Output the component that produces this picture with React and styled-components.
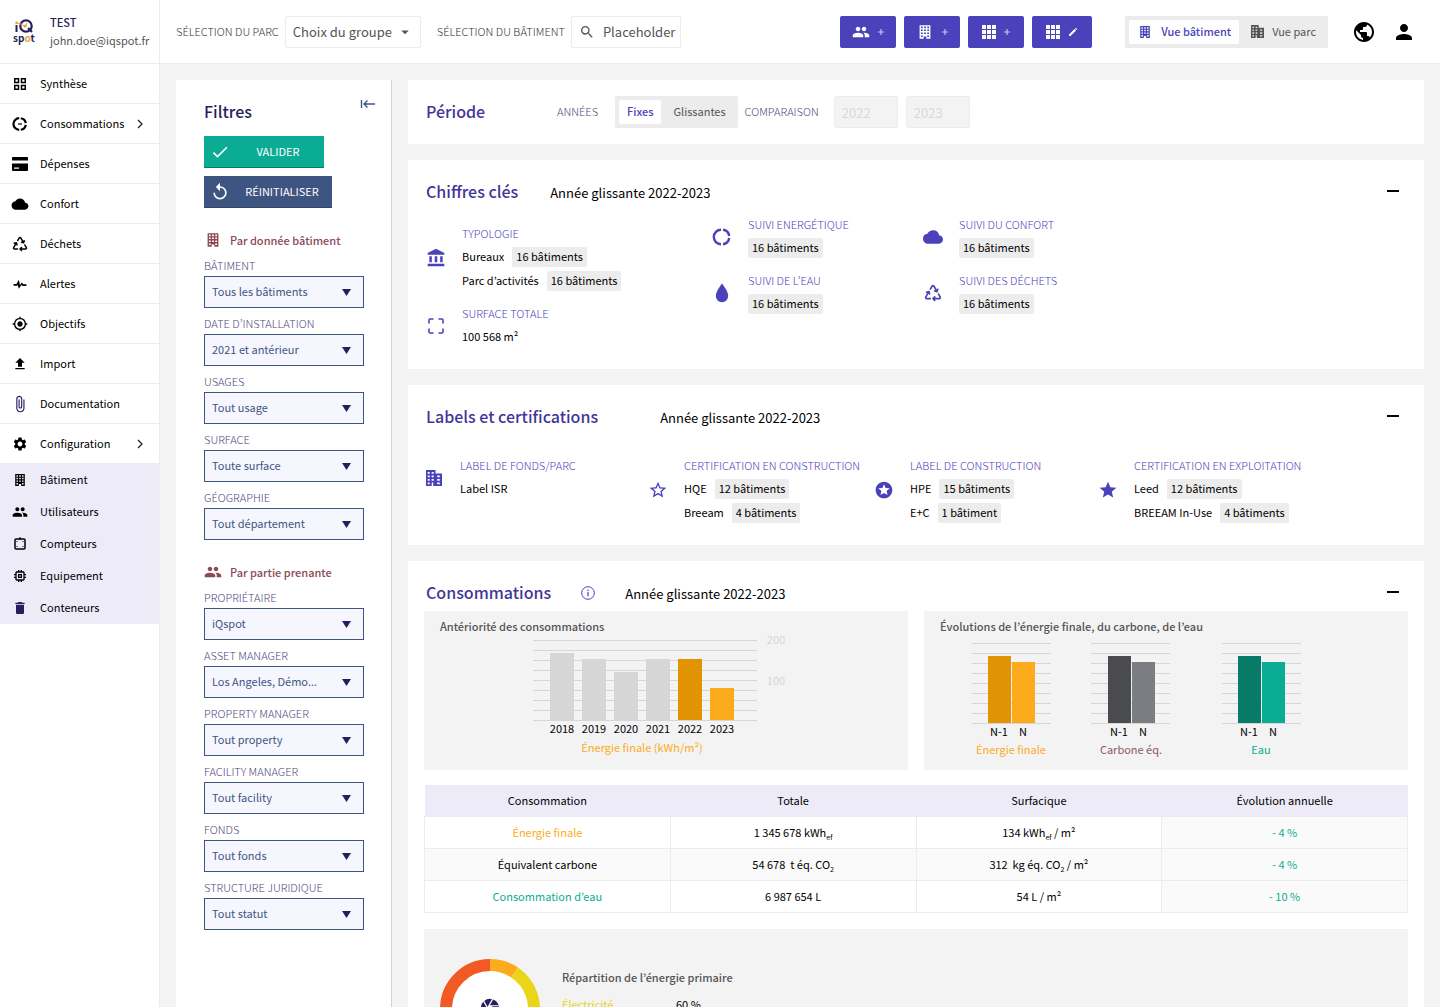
import React, { useState } from 'react';
import styled, { createGlobalStyle, css } from 'styled-components';
import {
  MdAccountBalance,
  MdArrowDropDown,
  MdAttachFile,
  MdCamera,
  MdCheck,
  MdCloud,
  MdDelete,
  MdFileUpload,
  MdGroup,
  MdMemory,
  MdMyLocation,
  MdPerson,
  MdPublic,
  MdReplay,
  MdSearch,
  MdSettings,
  MdStar,
  MdStarBorder,
  MdStars,
} from 'react-icons/md';
import { IoMdCloud } from 'react-icons/io';
import { PiRecycle, PiRecycleBold } from 'react-icons/pi';

const GlobalStyle = createGlobalStyle`
  *, *::before, *::after {
    box-sizing: border-box;
  }

  body {
    margin: 0;
    color: #000;
    background-color: #f3f3f3;
    font-family: 'Noto Sans CJK KR', 'Noto Sans', sans-serif;
    font-size: 11px;
    line-height: 20px;
  }

  h1, h2, h3, p, ul, figure {
    margin: 0;
    padding: 0;
  }

  button, input, select {
    font: inherit;
    color: inherit;
  }

  svg {
    display: block;
    flex-shrink: 0;
  }
`;

// the font sits low in its line box
const raisedText = css`
  padding-bottom: 2px;
  line-height: 18px;
`;

/* icons */

const BuildingIcon = ({ size = 20 }) => (
  <svg width={size} height={size} viewBox="0 0 20 20" fill="currentColor">
    <path
      fillRule="evenodd"
      d="M4 2.500h12v15h-4.500v-2.500h-3v2.500H4zM5.500 4v1.800h2v-1.800zM9 4v1.800h2v-1.800zM12.500 4v1.800h2v-1.800zM5.500 7.200v1.800h2v-1.800zM9 7.200v1.800h2v-1.800zM12.500 7.200v1.800h2v-1.800zM5.500 10.500v1.800h2v-1.800zM9 10.500v1.800h2v-1.800zM12.500 10.500v1.800h2v-1.800zM5.500 13.800v1.800h2v-1.800zM12.500 13.800v1.800h2v-1.800z"
    />
  </svg>
);

const BuildingsIcon = ({ size = 16 }) => (
  <svg width={size} height={size} viewBox="0 0 16 16" fill="currentColor">
    <path
      fillRule="evenodd"
      d="M0 0h9.500v3.500H16V16H0zM1.700 2v1.700h2V2zM5.700 2v1.700h2V2zM1.700 5.500v1.700h2V5.500zM5.700 5.500v1.700h2V5.500zM1.700 9v1.700h2V9zM5.700 9v1.700h2V9zM1.700 12.500v1.700h2V12.500zM5.700 12.500V16h1.500v-3.500zM11.200 5.500v1.700h2.600V5.500zM11.200 9v1.700h2.600V9zM11.200 12.500v1.700h2.600v-1.700z"
    />
  </svg>
);

const SquaresIcon = () => (
  <svg
    width="12"
    height="12"
    viewBox="0 0 12 12"
    fill="none"
    stroke="currentColor"
    strokeWidth="1.500"
  >
    <path d="M.75.75h3.750v3.750H.75zM7.500.75h3.750v3.750H7.500zM.75 7.500h3.750v3.750H.75zM7.500 7.500h3.750v3.750H7.500z" />
  </svg>
);

const RingIcon = ({ size = 20, withBar }) => (
  <svg
    width={size}
    height={size}
    viewBox="0 0 20 20"
    fill="none"
    stroke="currentColor"
    strokeWidth={withBar ? 2.8 : 2.4}
  >
    <path d="M9 2.800A7.200 7.200 0 0 0 9 17.200M11 2.800A7.200 7.200 0 0 1 17.200 9M17.200 11A7.200 7.200 0 0 1 11 17.200" />
    {withBar && <path d="M7.500 10h5" strokeWidth="1.500" />}
  </svg>
);

const CardIcon = () => (
  <svg width="20" height="20" viewBox="0 0 20 20" fill="currentColor">
    <path d="M3 3h14a1 1 0 0 1 1 1v2.500H2V4a1 1 0 0 1 1-1z" />
    <path
      fillRule="evenodd"
      d="M2 9.500h16V16a1 1 0 0 1-1 1H3a1 1 0 0 1-1-1zM4 13.500v1.200h5v-1.200z"
    />
  </svg>
);

const PulseIcon = () => (
  <svg width="14" height="14" viewBox="0 0 24 24" fill="currentColor">
    <path d="M1 12h5L10 4.500 12 13.500l3-4 3 2.800H23v3h-6.500l-1.800-1.700-5 6.600L8.200 13 7.500 15H1z" />
  </svg>
);

const DropIcon = () => (
  <svg width="20" height="20" viewBox="0 0 20 20" fill="currentColor">
    <path d="M10 .5C10 .5 3.800 8 3.800 13a6.200 6.200 0 0 0 12.400 0C16.200 8 10 .5 10 .5z" />
  </svg>
);

const MeterIcon = () => (
  <svg width="20" height="20" viewBox="0 0 20 20" fill="currentColor">
    <rect
      x="5"
      y="5"
      width="10"
      height="10"
      rx="1"
      fill="none"
      stroke="currentColor"
      strokeWidth="1.500"
    />
    <path d="M9 3.500h2v2H9zM6.500 7h1v1h-1zM12.500 7h1v1h-1zM6.500 12h1v1h-1zM12.500 12h1v1h-1z" />
  </svg>
);

const FrameIcon = () => (
  <svg
    width="20"
    height="20"
    viewBox="0 0 20 20"
    fill="none"
    stroke="currentColor"
    strokeWidth="1.600"
  >
    <path d="M3 7.500V4a1 1 0 0 1 1-1h3.500M12.500 3H16a1 1 0 0 1 1 1v3.500M17 12.500V16a1 1 0 0 1-1 1h-3.500M7.500 17H4a1 1 0 0 1-1-1v-3.500" />
  </svg>
);

const GridIcon = () => (
  <svg width="14" height="14" viewBox="0 0 14 14" fill="currentColor">
    <path d="M0 0h4v4H0zM5 0h4v4H5zM10 0h4v4h-4zM0 5h4v4H0zM5 5h4v4H5zM10 5h4v4h-4zM0 10h4v4H0zM5 10h4v4H5zM10 10h4v4h-4z" />
  </svg>
);

const PlusIcon = () => (
  <svg width="6" height="6" viewBox="0 0 6 6" stroke="#c6c2ec">
    <path d="M3 0v6M0 3h6" strokeWidth="1.200" />
  </svg>
);

const PencilIcon = () => (
  <svg width="10" height="10" viewBox="0 0 10 10" fill="#fff">
    <path d="M1 9V7.500L6.500 2 8 3.500 2.500 9zM7 1.500l.8-.8 1.500 1.500-.8.800z" />
  </svg>
);

const ChevronIcon = () => (
  <svg
    width="8"
    height="10"
    viewBox="0 0 8 10"
    fill="none"
    stroke="#222"
    strokeWidth="1.300"
  >
    <path d="M2 1l4 4-4 4" />
  </svg>
);

const CollapseIcon = () => (
  <svg
    width="16"
    height="10"
    viewBox="0 0 16 10"
    fill="none"
    stroke="currentColor"
    strokeWidth="1.400"
  >
    <path d="M1.500 1v8M15 5H4M7.500 1.500L4 5l3.500 3.500" />
  </svg>
);

const InfoIcon = () => (
  <svg
    width="14"
    height="14"
    viewBox="0 0 14 14"
    fill="none"
    stroke="#4b42bb"
  >
    <circle cx="7" cy="7" r="6.300" />
    <path d="M7 6v4.300M7 3.600v1.300" strokeWidth="1.200" />
  </svg>
);

const Logo = () => (
  <svg width="24" height="28" viewBox="0 0 24 28">
    <circle cx="14" cy="8" r="5.700" fill="none" stroke="#261f5e" strokeWidth="2.200" />
    <path d="M16 10l4 4" stroke="#261f5e" strokeWidth="2.200" />
    <path d="M4.500 7v7" stroke="#261f5e" strokeWidth="2" />
    <path d="M4 5l5 1 5 3 .5-4" fill="none" stroke="#eaa43c" strokeWidth="1" />
    <circle cx="4.500" cy="4.800" r="1.300" fill="#eaa43c" />
    <circle cx="13" cy="8" r="1.500" fill="#eaa43c" />
    <text x="1" y="24" fontSize="10" fontWeight="700" fill="#261f5e">
      sp
      <tspan fill="#eaa43c">o</tspan>t
    </text>
  </svg>
);

/* layout */

const StyledShell = styled.div`
  display: flex;
  height: 100vh;
`;

const StyledSidebar = styled.aside`
  flex: 0 0 160px;
  background-color: #fff;
  border-right: 1px solid #ececec;
`;

const StyledUser = styled.div`
  display: flex;
  align-items: center;
  gap: 14px;
  height: 64px;
  padding-left: 12px;
  border-bottom: 1px solid #ececec;
  color: #555;
`;

const StyledUserName = styled.p`
  font-weight: 500;
  line-height: 16px;
  color: #261f5e;
`;

const StyledMenu = styled.ul`
  list-style: none;
  background-color: ${({ $nested }) => ($nested ? '#edebf8' : '#fff')};
`;

const StyledMenuLink = styled.a`
  display: flex;
  align-items: center;
  gap: 10px;
  height: ${({ $nested }) => ($nested ? 32 : 40)}px;
  padding: 0 15px 0 10px;
  border-bottom: ${({ $nested }) => ($nested ? 0 : 1)}px solid #ececec;
  color: #000;
  text-decoration: none;
`;

const StyledMenuIcon = styled.span`
  display: grid;
  place-items: center;
  width: 20px;
  color: ${({ $navy }) => ($navy ? '#261f5e' : '#000')};
`;

const StyledMenuText = styled.span`
  ${raisedText};
  flex: 1;
`;

const StyledPage = styled.div`
  display: flex;
  flex-direction: column;
  flex: 1;
  min-width: 0;
`;

const StyledTopbar = styled.header`
  display: flex;
  align-items: center;
  flex: 0 0 64px;
  padding: 0 24px 0 16px;
  background-color: #fff;
  border-bottom: 1px solid #ececec;
`;

const StyledTopLabel = styled.label`
  ${raisedText};
  margin-right: 6px;
  font-weight: 300;
  color: #333;
`;

const StyledBody = styled.div`
  display: flex;
  flex: 1;
  gap: 16px;
  min-height: 0;
  padding: 16px 16px 0;
  overflow: auto;
  scrollbar-width: none;
`;

const StyledContent = styled.main`
  display: flex;
  flex-direction: column;
  flex: 1;
  gap: 16px;
  min-width: 0;
`;

/* controls */

const StyledSelectBox = styled.div`
  display: grid;
  align-items: center;

  > * {
    grid-area: 1 / 1;
  }

  svg {
    justify-self: end;
    pointer-events: none;
  }
`;

const StyledGroupSelectBox = styled(StyledSelectBox)`
  width: 136px;
  margin-right: 16px;
  color: #555;

  svg {
    margin-right: 7px;
  }
`;

const StyledGroupSelect = styled.select`
  width: 100%;
  height: 32px;
  padding: 0 24px 0 7px;
  appearance: none;
  background-color: #fff;
  border: 1px solid #ececec;
  border-radius: 2px;
  font-size: 13px;
`;

const StyledSearch = styled.div`
  display: flex;
  align-items: center;
  gap: 8px;
  width: 110px;
  height: 32px;
  padding: 0 2px 0 7px;
  border: 1px solid #ececec;
  border-radius: 2px;
  color: #555;
`;

const StyledSearchInput = styled.input`
  width: 100%;
  min-width: 0;
  padding: 0;
  border: 0;
  outline: none;
  background: transparent;
  font-size: 13px;

  &::placeholder {
    color: #555;
  }
`;

const StyledActions = styled.div`
  display: flex;
  gap: 8px;
  margin-left: auto;
`;

const StyledAction = styled.button`
  display: flex;
  align-items: center;
  justify-content: center;
  gap: 8px;
  width: ${({ $wide }) => ($wide ? 60 : 56)}px;
  height: 32px;
  padding: 0;
  border: 0;
  border-radius: 2px;
  color: #fff;
  background-color: #4b42bb;
  cursor: pointer;
`;

const StyledToggle = styled.div`
  display: flex;
  height: 32px;
  padding: 4px;
  border-radius: 2px;
  background-color: #ececec;

  button + button {
    padding-left: 12px;
  }
`;

const StyledToggleButton = styled.button`
  display: flex;
  align-items: center;
  gap: 8px;
  padding: 0 8px;
  border: 0;
  border-radius: 2px;
  background: transparent;
  color: #555;
  cursor: pointer;

  span {
    ${raisedText};
  }

  ${({ $active }) =>
    $active &&
    css`
      background-color: #fff;
      color: #4b42bb;
      font-weight: 500;
    `}
`;

const StyledViewToggle = styled(StyledToggle)`
  margin: 0 24px 0 33px;
`;

const StyledPeriodToggle = styled(StyledToggle)`
  margin-right: 7px;
`;

const StyledIconButton = styled.button`
  display: grid;
  place-items: center;
  width: 24px;
  height: 24px;
  padding: 0;
  border: 0;
  background: transparent;
  color: ${({ $color }) => $color || '#000'};
  cursor: pointer;
`;

const StyledIconButtons = styled.div`
  display: flex;
  gap: 16px;
`;

/* filters */

const StyledFilters = styled.section`
  flex: 0 0 216px;
  height: max-content;
  min-height: 100%;
  padding: 12px 11px 16px 28px;
  border-right: 1px solid #d2d0e2;
  background-color: #fff;
`;

const StyledFiltersHeader = styled.div`
  display: flex;
  justify-content: space-between;
  margin-bottom: 12px;
`;

const StyledFiltersTitle = styled.h2`
  margin-top: 8px;
  padding-bottom: 2px;
  font-size: 16px;
  font-weight: 500;
  line-height: 22px;
  color: #261f5e;
`;

const StyledFilterButton = styled.button`
  display: flex;
  align-items: center;
  width: ${({ $width }) => $width}px;
  height: 32px;
  padding: 0 6px;
  border: 0;
  border-bottom: 1px solid ${({ $edge }) => $edge};
  color: #fff;
  background-color: ${({ $fill }) => $fill};
  cursor: pointer;

  & + & {
    margin-top: 8px;
  }

  span {
    ${raisedText};
    flex: 1;
    padding-left: 8px;
    text-align: center;
  }
`;

const StyledFilterGroup = styled.div`
  display: flex;
  flex-direction: column;
  gap: 6px;
  width: 160px;
  margin-top: 22px;
`;

const StyledFilterGroupTitle = styled.h3`
  display: flex;
  align-items: center;
  gap: 8px;
  font-size: 11px;
  font-weight: 500;
  line-height: 20px;
  color: #8a4a56;
`;

const StyledFieldLabel = styled.label`
  ${raisedText};
  display: block;
  font-weight: 300;
  color: #4f487c;
`;

const StyledFieldSelect = styled.select`
  width: 100%;
  height: 32px;
  padding: 0 32px 2px 7px;
  appearance: none;
  border: 1px solid #3f5581;
  border-radius: 0;
  color: #3f5581;
  background-color: #f6f7fe;

  & + svg {
    margin-right: 13px;
  }
`;

/* cards */

const StyledCard = styled.section`
  padding: 20px 16px;
  background-color: #fff;
`;

const StyledPeriod = styled.section`
  display: flex;
  align-items: center;
  padding: 16px 18px;
  background-color: #fff;
`;

const StyledTitle = styled.h2`
  padding-bottom: 2px;
  font-size: 16px;
  font-weight: 500;
  line-height: 22px;
  color: #3f3699;
`;

const StyledPeriodTitle = styled(StyledTitle)`
  width: 131px;
`;

const StyledPeriodLabel = styled.label`
  ${raisedText};
  margin-right: ${({ $gap }) => $gap}px;
  font-weight: 300;
  color: #4f487c;
`;

const StyledYear = styled.input`
  width: 64px;
  height: 32px;
  margin-right: 8px;
  padding: 0 7px;
  border: 1px solid #ececec;
  border-radius: 2px;
  background-color: #f3f3f3;
  font-size: 13px;

  &::placeholder {
    color: #d9d9d9;
    opacity: 1;
  }
`;

const StyledCardHeader = styled.div`
  display: flex;
  align-items: center;
  gap: ${({ $gap }) => $gap}px;
  margin-bottom: ${({ $bottom }) => $bottom}px;
  padding: 0 3px 0 2px;
`;

const StyledCardDate = styled.p`
  flex: 1;
  padding-top: 2px;
  font-size: 13px;
`;

const StyledFigures = styled.div`
  display: grid;
  grid-template-columns: 286fr 211fr 485fr;
  padding-left: 2px;
`;

const StyledColumn = styled.div`
  display: flex;
  flex-direction: column;
  gap: 10px;
  padding-top: ${({ $top }) => $top || 0}px;
`;

const StyledLabels = styled.div`
  display: grid;
  grid-template-columns: 224fr 226fr 224fr 310fr;
  align-items: start;
`;

const StyledStat = styled.div`
  display: flex;
  align-items: center;
  gap: 16px;
  color: #4b42bb;
`;

const StyledStatIcon = styled.span`
  display: grid;
  place-items: center;
  width: 20px;
`;

const StyledStatLabel = styled.h3`
  padding-bottom: 2px;
  font-size: 11px;
  font-weight: 300;
  line-height: 20px;
  white-space: nowrap;
`;

const StyledStatRow = styled.p`
  display: flex;
  align-items: center;
  gap: 8px;
  height: 24px;
  color: #000;

  span {
    ${raisedText};
  }
`;

const StyledChip = styled.span`
  padding: 0 4px;
  border-radius: 2px;
  background-color: #ececec;
`;

const StyledPanels = styled.div`
  display: grid;
  grid-template-columns: 1fr 1fr;
  gap: 16px;
  margin-bottom: 15px;
`;

const StyledPanel = styled.div`
  height: 159px;
  padding: 6px 16px;
  background-color: #f3f3f3;
`;

const StyledPanelTitle = styled.h3`
  ${raisedText};
  font-size: 11px;
  font-weight: 500;
  color: #555;
`;

const StyledHistory = styled.figure`
  padding-left: 93px;
`;

const StyledEvolutions = styled.div`
  display: flex;
  gap: 40px;
  padding-left: 32px;

  figure:last-child {
    margin-left: 12px;
  }
`;

const StyledChart = styled.svg`
  overflow: visible;
  font-size: 11px;
  text-anchor: middle;
`;

const StyledTable = styled.table`
  width: 100%;
  border-collapse: collapse;
  table-layout: fixed;
  text-align: center;

  th {
    height: 31px;
    padding: 0;
    background-color: #edebf8;
    font-weight: 400;
  }

  td {
    height: 32px;
    padding: 0;
    border: 1px solid #ececec;
  }

  tr:nth-child(even) td,
  td:last-child {
    background-color: #fafafa;
  }

  td:last-child {
    color: #0bac94;
  }

  sub {
    font-size: 7px;
    line-height: 0;
    vertical-align: -3px;
  }
`;

const StyledName = styled.td`
  color: ${({ $color }) => $color};
`;

const StyledBreakdown = styled.div`
  display: flex;
  gap: 22px;
  margin-top: 16px;
  padding: 30px 16px;
  background-color: #f3f3f3;
`;

const StyledBreakdownTitle = styled(StyledPanelTitle)`
  margin: 9px 0 6px;
`;

const StyledBreakdownRow = styled.p`
  display: flex;

  span:first-child {
    width: 114px;
    color: #e9d41b;
  }
`;

/* data */

const menu = [
  { text: 'Synthèse', icon: <SquaresIcon /> },
  { text: 'Consommations', icon: <RingIcon size={16} withBar />, more: true },
  { text: 'Dépenses', icon: <CardIcon /> },
  { text: 'Confort', icon: <IoMdCloud size={18} /> },
  { text: 'Déchets', icon: <PiRecycleBold size={16} /> },
  { text: 'Alertes', icon: <PulseIcon /> },
  { text: 'Objectifs', icon: <MdMyLocation size={16} /> },
  { text: 'Import', icon: <MdFileUpload size={16} /> },
  { text: 'Documentation', icon: <MdAttachFile size={18} />, navy: true },
  { text: 'Configuration', icon: <MdSettings size={16} />, more: true },
];

const submenu = [
  { text: 'Bâtiment', icon: <BuildingIcon size={16} /> },
  { text: 'Utilisateurs', icon: <MdGroup size={16} /> },
  { text: 'Compteurs', icon: <MeterIcon /> },
  { text: 'Equipement', icon: <MdMemory size={16} /> },
  { text: 'Conteneurs', icon: <MdDelete size={16} />, navy: true },
];

const buildingFilters = [
  ['Bâtiment', 'Tous les bâtiments'],
  ['Date d’installation', '2021 et antérieur'],
  ['Usages', 'Tout usage'],
  ['Surface', 'Toute surface'],
  ['Géographie', 'Tout département'],
];

const stakeholderFilters = [
  ['Propriétaire', 'iQspot'],
  ['Asset manager', 'Los Angeles, Démo...'],
  ['Property manager', 'Tout property'],
  ['Facility manager', 'Tout facility'],
  ['Fonds', 'Tout fonds'],
  ['Structure juridique', 'Tout statut'],
];

const history = [
  { year: 2018, height: 67, color: '#d6d6d6' },
  { year: 2019, height: 61, color: '#d6d6d6' },
  { year: 2020, height: 48, color: '#d6d6d6' },
  { year: 2021, height: 61, color: '#d6d6d6' },
  { year: 2022, height: 61, color: '#e29303' },
  { year: 2023, height: 32, color: '#fbab1b' },
];

const evolutions = [
  { name: 'Énergie finale', text: '#fbab1b', before: '#e29303', now: '#fbab1b' },
  { name: 'Carbone éq.', text: '#8a5a62', before: '#4a4b4e', now: '#7b7d82', start: 17 },
  { name: 'Eau', text: '#0bac94', before: '#077a68', now: '#0bac94' },
];

/* components */

const Menu = ({ items, nested }) => (
  <StyledMenu $nested={nested}>
    {items.map(({ text, icon, more, navy }) => (
      <li key={text}>
        <StyledMenuLink href="#" $nested={nested}>
          <StyledMenuIcon $navy={navy}>{icon}</StyledMenuIcon>
          <StyledMenuText>{text}</StyledMenuText>
          {more && <ChevronIcon />}
        </StyledMenuLink>
      </li>
    ))}
  </StyledMenu>
);

const Field = ({ label, value }) => (
  <div>
    <StyledFieldLabel htmlFor={label}>{label.toUpperCase()}</StyledFieldLabel>
    <StyledSelectBox>
      <StyledFieldSelect id={label}>
        <option>{value}</option>
      </StyledFieldSelect>
      <svg width="9" height="7" viewBox="0 0 9 7" fill="#261f5e">
        <path d="M0 0h9L4.500 7z" />
      </svg>
    </StyledSelectBox>
  </div>
);

const FilterGroup = ({ icon, title, fields }) => (
  <StyledFilterGroup>
    <StyledFilterGroupTitle>
      {icon}
      {title}
    </StyledFilterGroupTitle>
    {fields.map(([label, value]) => (
      <Field key={label} label={label} value={value} />
    ))}
  </StyledFilterGroup>
);

const Stat = ({ icon, label, rows }) => (
  <StyledStat>
    <StyledStatIcon>{icon}</StyledStatIcon>
    <div>
      <StyledStatLabel>{label}</StyledStatLabel>
      {rows.map(([name, count]) => (
        <StyledStatRow key={name + count}>
          {name && <span>{name}</span>}
          {count && <StyledChip>{count}</StyledChip>}
        </StyledStatRow>
      ))}
    </div>
  </StyledStat>
);

const CardHeader = ({ title, gap, bottom, info }) => (
  <StyledCardHeader $gap={gap} $bottom={bottom}>
    <StyledTitle>{title}</StyledTitle>
    {info && <InfoIcon />}
    <StyledCardDate>Année glissante 2022-2023</StyledCardDate>
    <StyledIconButton aria-label={`Réduire ${title}`}>
      <svg width="12" height="4" viewBox="0 0 12 4">
        <path d="M0 0h12v2H0z" />
      </svg>
    </StyledIconButton>
  </StyledCardHeader>
);

const Gridlines = ({ width }) => (
  <g stroke="#d6d6d6">
    {[0, 1, 2, 3, 4, 5, 6, 7, 8].map(i => (
      <path key={i} d={`M0 ${i * 10 + 3.5}H${width}`} />
    ))}
  </g>
);

const HistoryChart = () => (
  <StyledHistory>
    <StyledChart width="260" height="120">
      <Gridlines width={224} />
      {history.map(({ year, height, color }, i) => (
        <g key={year}>
          <rect x={i * 32 + 17} y={83 - height} width="24" height={height} fill={color} />
          <text x={i * 32 + 29} y="96">
            {year}
          </text>
        </g>
      ))}
      <text x="243" y="7" fill="#d6d6d6">
        200
      </text>
      <text x="243" y="48" fill="#d6d6d6">
        100
      </text>
      <text x="109" y="115" fill="#fbab1b">
        Énergie finale (kWh/m²)
      </text>
    </StyledChart>
  </StyledHistory>
);

const EvolutionChart = ({ name, text, before, now, start = 16 }) => (
  <figure>
    <StyledChart width="79" height="120">
      <g transform="translate(0 3)">
        <Gridlines width={79} />
      </g>
      <rect x={start} y="19" width="23" height="67" fill={before} />
      <rect x={start + 24} y="25" width="23" height="61" fill={now} />
      <text x={start + 11} y="99">
        N-1
      </text>
      <text x={start + 35} y="99">
        N
      </text>
      <text x={start + 23} y="117" fill={text}>
        {name}
      </text>
    </StyledChart>
  </figure>
);

const Donut = () => (
  <svg width="100" height="100" viewBox="0 0 100 100">
    <circle cx="50" cy="50" r="44" fill="#fff" />
    <g fill="none" strokeWidth="12">
      <path d="M50 6A44 44 0 0 1 74.600 13.500" stroke="#fbab1b" />
      <path d="M74.600 13.500A44 44 0 0 1 50 94" stroke="#ead51b" />
      <path d="M50 94A44 44 0 0 1 50 6" stroke="#f15a24" />
    </g>
    <MdCamera x="39" y="38" size={22} color="#261f5e" />
  </svg>
);

const App = () => {
  const [view, setView] = useState('building');
  const [years, setYears] = useState('fixed');

  return (
    <StyledShell>
      <GlobalStyle />
      <StyledSidebar>
        <StyledUser>
          <Logo />
          <div>
            <StyledUserName>TEST</StyledUserName>
            <p>john.doe@iqspot.fr</p>
          </div>
        </StyledUser>
        <nav>
          <Menu items={menu} />
          <Menu items={submenu} nested />
        </nav>
      </StyledSidebar>

      <StyledPage>
        <StyledTopbar>
          <StyledTopLabel htmlFor="group">SÉLECTION DU PARC</StyledTopLabel>
          <StyledGroupSelectBox>
            <StyledGroupSelect id="group">
              <option>Choix du groupe</option>
            </StyledGroupSelect>
            <MdArrowDropDown size={18} />
          </StyledGroupSelectBox>
          <StyledTopLabel htmlFor="building">SÉLECTION DU BÂTIMENT</StyledTopLabel>
          <StyledSearch>
            <MdSearch size={16} />
            <StyledSearchInput id="building" placeholder="Placeholder" />
          </StyledSearch>
          <StyledActions>
            <StyledAction aria-label="Ajouter un utilisateur">
              <MdGroup size={18} />
              <PlusIcon />
            </StyledAction>
            <StyledAction aria-label="Ajouter un bâtiment">
              <BuildingIcon size={18} />
              <PlusIcon />
            </StyledAction>
            <StyledAction aria-label="Ajouter un parc">
              <GridIcon />
              <PlusIcon />
            </StyledAction>
            <StyledAction aria-label="Modifier un parc" $wide>
              <GridIcon />
              <PencilIcon />
            </StyledAction>
          </StyledActions>
          <StyledViewToggle>
            <StyledToggleButton
              $active={view === 'building'}
              onClick={() => setView('building')}
            >
              <BuildingIcon size={16} />
              <span>Vue bâtiment</span>
            </StyledToggleButton>
            <StyledToggleButton
              $active={view === 'park'}
              onClick={() => setView('park')}
            >
              <BuildingsIcon size={13} />
              <span>Vue parc</span>
            </StyledToggleButton>
          </StyledViewToggle>
          <StyledIconButtons>
            <StyledIconButton aria-label="Langue">
              <MdPublic size={24} />
            </StyledIconButton>
            <StyledIconButton aria-label="Compte">
              <MdPerson size={24} />
            </StyledIconButton>
          </StyledIconButtons>
        </StyledTopbar>

        <StyledBody>
          <StyledFilters>
            <StyledFiltersHeader>
              <StyledFiltersTitle>Filtres</StyledFiltersTitle>
              <StyledIconButton aria-label="Replier les filtres" $color="#3f5581">
                <CollapseIcon />
              </StyledIconButton>
            </StyledFiltersHeader>
            <StyledFilterButton $width={120} $fill="#0bac94" $edge="#077a68">
              <MdCheck size={20} />
              <span>VALIDER</span>
            </StyledFilterButton>
            <StyledFilterButton $width={128} $fill="#3f5581" $edge="#33466b">
              <MdReplay size={20} />
              <span>RÉINITIALISER</span>
            </StyledFilterButton>
            <FilterGroup
              icon={<BuildingIcon size={18} />}
              title="Par donnée bâtiment"
              fields={buildingFilters}
            />
            <FilterGroup
              icon={<MdGroup size={18} />}
              title="Par partie prenante"
              fields={stakeholderFilters}
            />
          </StyledFilters>

          <StyledContent>
            <StyledPeriod>
              <StyledPeriodTitle>Période</StyledPeriodTitle>
              <StyledPeriodLabel as="span" $gap={17}>
                ANNÉES
              </StyledPeriodLabel>
              <StyledPeriodToggle>
                <StyledToggleButton
                  $active={years === 'fixed'}
                  onClick={() => setYears('fixed')}
                >
                  <span>Fixes</span>
                </StyledToggleButton>
                <StyledToggleButton
                  $active={years === 'rolling'}
                  onClick={() => setYears('rolling')}
                >
                  <span>Glissantes</span>
                </StyledToggleButton>
              </StyledPeriodToggle>
              <StyledPeriodLabel htmlFor="from" $gap={15}>
                COMPARAISON
              </StyledPeriodLabel>
              <StyledYear id="from" placeholder="2022" disabled />
              <StyledYear aria-label="Année de fin" placeholder="2023" disabled />
            </StyledPeriod>

            <StyledCard>
              <CardHeader title="Chiffres clés" gap={32} bottom={10} />
              <StyledFigures>
                <StyledColumn $top={9}>
                  <Stat
                    icon={<MdAccountBalance size={20} />}
                    label="TYPOLOGIE"
                    rows={[
                      ['Bureaux', '16 bâtiments'],
                      ['Parc d’activités', '16 bâtiments'],
                    ]}
                  />
                  <Stat
                    icon={<FrameIcon />}
                    label="SURFACE TOTALE"
                    rows={[['100 568 m²']]}
                  />
                </StyledColumn>
                <StyledColumn>
                  <Stat
                    icon={<RingIcon />}
                    label="SUIVI ENERGÉTIQUE"
                    rows={[['', '16 bâtiments']]}
                  />
                  <Stat
                    icon={<DropIcon />}
                    label="SUIVI DE L’EAU"
                    rows={[['', '16 bâtiments']]}
                  />
                </StyledColumn>
                <StyledColumn>
                  <Stat
                    icon={<MdCloud size={20} />}
                    label="SUIVI DU CONFORT"
                    rows={[['', '16 bâtiments']]}
                  />
                  <Stat
                    icon={<PiRecycleBold size={18} />}
                    label="SUIVI DES DÉCHETS"
                    rows={[['', '16 bâtiments']]}
                  />
                </StyledColumn>
              </StyledFigures>
            </StyledCard>

            <StyledCard>
              <CardHeader title="Labels et certifications" gap={62} bottom={26} />
              <StyledLabels>
                <Stat
                  icon={<BuildingsIcon />}
                  label="LABEL DE FONDS/PARC"
                  rows={[['Label ISR']]}
                />
                <Stat
                  icon={<MdStarBorder size={20} />}
                  label="CERTIFICATION EN CONSTRUCTION"
                  rows={[
                    ['HQE', '12 bâtiments'],
                    ['Breeam', '4 bâtiments'],
                  ]}
                />
                <Stat
                  icon={<MdStars size={20} />}
                  label="LABEL DE CONSTRUCTION"
                  rows={[
                    ['HPE', '15 bâtiments'],
                    ['E+C', '1 bâtiment'],
                  ]}
                />
                <Stat
                  icon={<MdStar size={20} />}
                  label="CERTIFICATION EN EXPLOITATION"
                  rows={[
                    ['Leed', '12 bâtiments'],
                    ['BREEAM In-Use', '4 bâtiments'],
                  ]}
                />
              </StyledLabels>
            </StyledCard>

            <StyledCard>
              <CardHeader title="Consommations" gap={30} bottom={6} info />
              <StyledPanels>
                <StyledPanel>
                  <StyledPanelTitle>Antériorité des consommations</StyledPanelTitle>
                  <HistoryChart />
                </StyledPanel>
                <StyledPanel>
                  <StyledPanelTitle>
                    Évolutions de l’énergie finale, du carbone, de l’eau
                  </StyledPanelTitle>
                  <StyledEvolutions>
                    {evolutions.map(item => (
                      <EvolutionChart key={item.name} {...item} />
                    ))}
                  </StyledEvolutions>
                </StyledPanel>
              </StyledPanels>

              <StyledTable>
                <thead>
                  <tr>
                    <th>Consommation</th>
                    <th>Totale</th>
                    <th>Surfacique</th>
                    <th>Évolution annuelle</th>
                  </tr>
                </thead>
                <tbody>
                  <tr>
                    <StyledName $color="#fbab1b">Énergie finale</StyledName>
                    <td>
                      1 345 678 kWh<sub>ef</sub>
                    </td>
                    <td>
                      134 kWh<sub>ef</sub> / m²
                    </td>
                    <td>- 4 %</td>
                  </tr>
                  <tr>
                    <StyledName $color="#000">Équivalent carbone</StyledName>
                    <td>
                      54 678 &nbsp;t éq. CO<sub>2</sub>
                    </td>
                    <td>
                      312 &nbsp;kg éq. CO<sub>2</sub> / m²
                    </td>
                    <td>- 4 %</td>
                  </tr>
                  <tr>
                    <StyledName $color="#0bac94">Consommation d’eau</StyledName>
                    <td>6 987 654 L</td>
                    <td>54 L / m²</td>
                    <td>- 10 %</td>
                  </tr>
                </tbody>
              </StyledTable>

              <StyledBreakdown>
                <Donut />
                <div>
                  <StyledBreakdownTitle>
                    Répartition de l’énergie primaire
                  </StyledBreakdownTitle>
                  <StyledBreakdownRow>
                    <span>Électricité</span>
                    <span>60 %</span>
                  </StyledBreakdownRow>
                </div>
              </StyledBreakdown>
            </StyledCard>
          </StyledContent>
        </StyledBody>
      </StyledPage>
    </StyledShell>
  );
};

export default App;
